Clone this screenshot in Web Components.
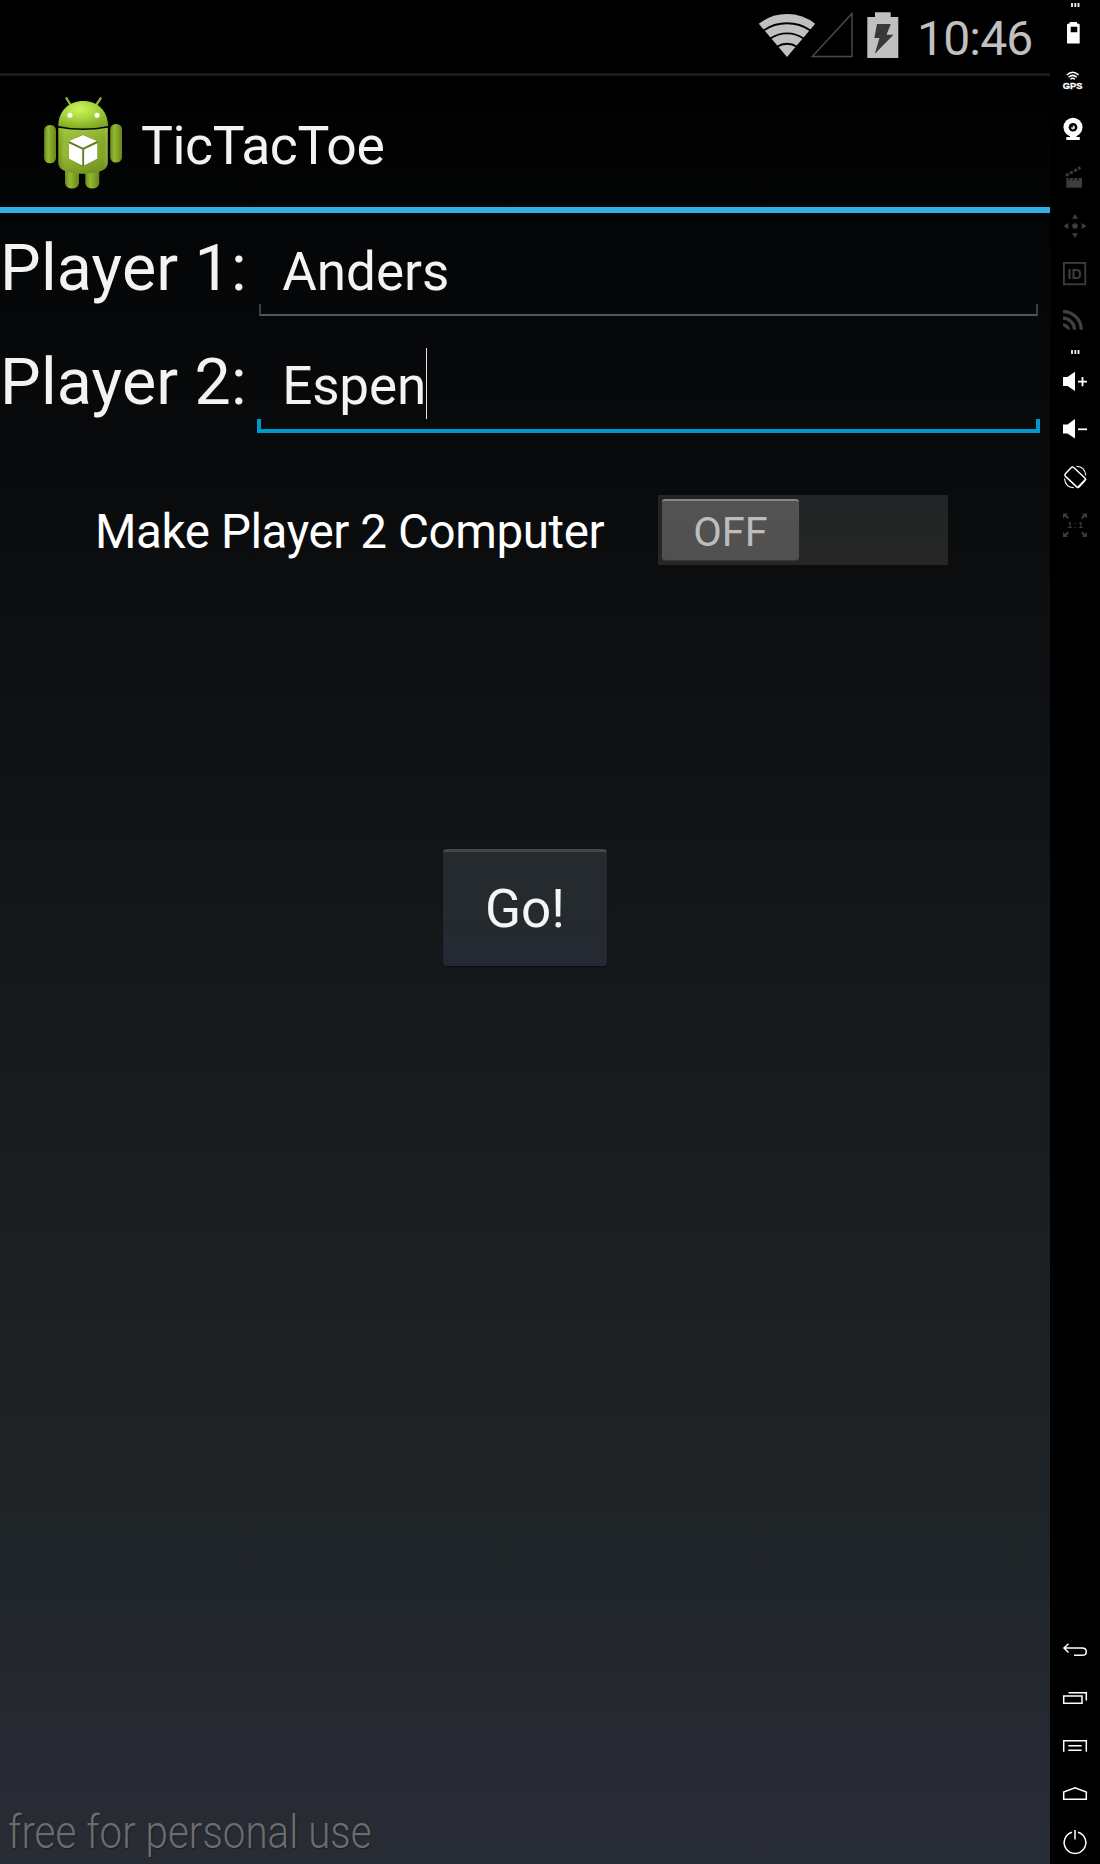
<!DOCTYPE html>
<html lang="en">
<head>
<meta charset="utf-8">
<title>TicTacToe</title>
<style>
html,body{margin:0;background:#000;height:1864px;overflow:hidden}
</style>
</head>
<body>
<tic-emulator></tic-emulator>
<script>
const define = (name, html, after) => customElements.define(name, class extends HTMLElement {
  constructor() {
    super();
    const t = document.createElement('template');
    t.innerHTML = html;
    this.attachShadow({mode: 'open'}).append(t.content.cloneNode(true));
  }
  connectedCallback() { if (after) after(this, this.shadowRoot); }
});

define('status-bar', `
<style>
:host{display:flex;box-sizing:border-box;height:76px;border-bottom:3px solid #1b1b1b;background:#000;justify-content:flex-end;padding-right:16px}
svg{display:block;width:160px;height:73px;flex:none}
span{font-size:48px;line-height:77px;height:73px;color:#c0c0c0;width:117px;white-space:nowrap;letter-spacing:-.8px}
</style>
<svg viewBox="757 0 160 73">
<path d="M787 57 L758.8 23.8 Q771 14 787 14 Q803 14 815.2 23.8 Z" fill="#c0c0c0"/>
<g fill="none" stroke="#000" stroke-width="1.9">
<path d="M763.5 30.5 Q774 23.3 787 23.3 Q800 23.3 810.500 30.500"/>
<path d="M770 38.800 Q777.500 33.400 787 33.400 Q796.500 33.400 804 38.800"/>
<path d="M777 46.700 Q781.500 43.800 787 43.800 Q792.500 43.800 797 46.700"/></g>
<path d="M812.300 56.500 L852 13.500 V56.500 Z" fill="none" stroke="#484848" stroke-width="1.500"/>
<path d="M867.300 17 H875 V12.300 H890.700 V17 H898.300 V58 H867.300 Z" fill="#c0c0c0"/>
<path d="M877 24 H890.800 L886.500 34.700 H893.500 L874.800 53.700 L879.500 38 H874.300 Z" fill="#383838"/>
</svg><span>10:46</span>`);

define('android-icon', `
<style>:host{display:block;width:90px;height:100px}svg{display:block}</style>
<svg width="90" height="100" viewBox="40 92 90 100">
<defs>
<radialGradient id="h" cx=".42" cy=".3" r=".75"><stop offset="0" stop-color="#cdf560"/><stop offset=".45" stop-color="#a9d73c"/><stop offset="1" stop-color="#7ea423"/></radialGradient>
<linearGradient id="b" x1="0" x2="1" y1="0" y2="0"><stop offset="0" stop-color="#7e9e25"/><stop offset=".12" stop-color="#9bc237"/><stop offset=".5" stop-color="#96bc33"/><stop offset=".93" stop-color="#86aa2a"/><stop offset="1" stop-color="#a3bd5c"/></linearGradient>
<linearGradient id="d" x1="0" x2="0" y1="0" y2="1"><stop offset="0" stop-color="#b0dc48" stop-opacity=".35"/><stop offset=".6" stop-color="#567016" stop-opacity=".1"/><stop offset="1" stop-color="#435a0e" stop-opacity=".4"/></linearGradient>
<linearGradient id="a" x1="0" x2="1" y1="0" y2="0"><stop offset="0" stop-color="#6d8b1f"/><stop offset=".35" stop-color="#93ba32"/><stop offset="1" stop-color="#66851b"/></linearGradient>
</defs>
<g stroke="#8fb33a" stroke-width="2.300" stroke-linecap="round"><path d="M66.500 98.300 L70.300 104.500 M100.600 98.300 L96.500 104.500"/></g>
<rect x="65" y="164" width="14" height="24.500" rx="6" fill="url(#a)"/><rect x="85.300" y="164" width="14" height="24.500" rx="6" fill="url(#a)"/>
<rect x="44.200" y="125" width="11.800" height="38.300" rx="5.500" fill="url(#a)"/><rect x="110.200" y="124" width="11.800" height="38.500" rx="5.500" fill="url(#a)"/>
<path d="M58.300 126 C58.300 111 69 101 83.200 101 C97.500 101 108 111 108 126 Q96 128.500 83.200 128.500 Q70 128.500 58.300 126Z" fill="url(#h)"/>
<path d="M58.300 127.800 Q70 130 83.200 130 Q96 130 107.700 127.800 V163 Q107.700 168 101 171 Q93 173.800 83 173.800 Q73 173.800 65 171 Q58.300 168 58.300 163Z" fill="url(#b)"/>
<path d="M58.300 127.800 Q70 130 83.200 130 Q96 130 107.700 127.800 V163 Q107.700 168 101 171 Q93 173.800 83 173.800 Q73 173.800 65 171 Q58.300 168 58.300 163Z" fill="url(#d)"/>
<circle cx="70" cy="115.300" r="2.500" fill="#fff"/><circle cx="97" cy="115.300" r="2.500" fill="#fff"/>
<path d="M69 141 L83 134.500 L97.500 141 V159 L83 166.500 L69 159Z" fill="#64801c"/>
<path d="M83 135 L97 141 L83 147.700 L69 141Z M69 143.300 L82.200 149.500 V165.500 L69 158.700Z M84.100 149.500 L97.300 143.300 V158.700 L84.100 165.500Z" fill="#fff"/>
</svg>`);

define('action-bar', `
<style>
:host{display:flex;box-sizing:border-box;height:137px;border-bottom:6px solid #33b0e2;padding:16px 0 0 40px}
div{margin-left:11px;font-size:53.5px;line-height:107px;height:100px;color:#f3f3f3;white-space:nowrap;letter-spacing:-.43px}
</style><android-icon></android-icon><div><slot></slot></div>`);

define('player-field', `
<style>
:host{display:flex;height:114px;color:#f3f3f3;white-space:nowrap}
label{width:257px;font-size:64.500px;line-height:110px;letter-spacing:.2px}
.f{position:relative;flex:none;width:783px;height:120px;box-sizing:border-box;padding:4px 0 0 25.200px;display:flex;align-items:flex-start;font-size:53px;line-height:110px}
:host([focused]) .f{letter-spacing:-.15px}
.u{position:absolute;left:2px;right:2px;top:91px;height:12px;box-sizing:border-box;border:solid #3c3d3e;border-width:0 2px 2px;border-bottom-color:#555657}
:host([focused]) .u{left:0;right:0;top:92px;height:14px;border:4px solid #0099cc;border-top:0}
i{display:none;width:1.500px;height:71px;margin:17px 0 0 -.500px;background:#e4e4e4}
:host([focused]) i{display:block}
</style><label><slot name="label"></slot></label><div class="f"><span><slot></slot></span><i></i><div class="u"></div></div>`);

define('toggle-switch', `
<style>
:host{display:flex;box-sizing:border-box;width:290px;height:70px;padding:4px;background:linear-gradient(#232426,#252625)}
div{box-sizing:border-box;width:137px;height:61px;border-radius:3px;border-top:2px solid #858686;background:linear-gradient(#525352,#505050);box-shadow:0 1px 1px #3a3a3a;color:#bdbdbd;text-align:center;font-size:41.500px;line-height:61px}
</style><div><slot></slot></div>`);

define('switch-row', `
<style>
:host{display:flex;height:70px;margin-top:54px;padding-left:95px}
span{width:563px;font-size:47.500px;line-height:74px;color:#fff;white-space:nowrap;letter-spacing:-.4px}
</style><span><slot></slot></span><toggle-switch>OFF</toggle-switch>`);

define('go-button', `
<style>
:host{display:block;box-sizing:border-box;width:164px;height:117px;margin:284px 0 0 443px;border-radius:4px;border-top:3px solid #424749;background:linear-gradient(#242a2d 0,#242a2e 55%,#252932 75%,#252932);box-shadow:0 1px 2px rgba(0,0,0,.5);color:#f5f5f5;text-align:center;font-size:53px;line-height:115px}
</style><slot></slot>`);

define('app-screen', `
<style>
:host{display:flex;flex-direction:column;width:1050px;height:1864px;flex:none;background:linear-gradient(#000 76px,#040506 213px,#0a0b0d 500px,#13171a 900px,#1c2023 1300px,#21262a 1600px,#272a33 1760px,#282c34)}
main{flex:1;display:flex;flex-direction:column}
footer{font-weight:300;font-size:46px;line-height:60px;color:#6a6d70;text-shadow:1px 1px 1px #1b1d22;padding:0 0 2.500px 8px;white-space:nowrap}
footer span{display:inline-block;transform:scaleX(.877);transform-origin:0 0}
</style>
<status-bar></status-bar><action-bar>TicTacToe</action-bar>
<main>
<player-field><span slot="label">Player 1:</span>Anders</player-field>
<player-field focused><span slot="label">Player 2:</span>Espen</player-field>
<switch-row>Make Player 2 Computer</switch-row>
<go-button>Go!</go-button>
</main>
<footer><span>free for personal use</span></footer>`);

const ICONS = {
dots: [0, 8, '<path d="M21 3h2v4h-2zM24.300 3h2v4h-2zM27.500 3h2v4h-2z" fill="#ddd"/>'],
battery: [8, 48, '<path fill-rule="evenodd" d="M17 24.500 L18.500 23.500 H19.700 V22 H27 V23.500 H28.300 L29.700 24.500 V43.500 H17Z M20.700 26.700 V32.300 H27.300 V26.700Z" fill="#fff"/>'],
gps: [56, 48, '<g fill="none" stroke="#fff" stroke-width="1.500"><path d="M16.800 75 Q22.700 69.500 28.600 75M18.600 77.200 Q22.700 73.500 26.800 77.200M20.500 79.200 Q22.700 77.300 24.900 79.200"/></g><text x="12.800" y="88.700" font-size="8.600" font-weight="700" stroke="#fff" stroke-width=".3" fill="#fff" font-family="Liberation Sans,sans-serif" textLength="19.500" lengthAdjust="spacingAndGlyphs">GPS</text>'],
camera: [104, 48, '<circle cx="23" cy="127.300" r="9.500" fill="#fff"/><circle cx="23" cy="127.300" r="4.300" fill="#000"/><circle cx="23" cy="127.500" r="2" fill="#ddd"/><circle cx="22" cy="126.500" r="1" fill="#000"/><path d="M20 135h6.500v2h3.300v3H16.300v-3H20z" fill="#fff"/>'],
clapper: [152, 48, '<path d="M16.300 178 H32 V187.700 H16.300Z" fill="#3d3d3b"/><path d="M15.800 175.500 L30.500 167.500" stroke="#3d3d3b" stroke-width="3" stroke-dasharray="3.200 1.500" fill="none"/><path d="M18 180.300 l2-2.300 M22.500 180.300 l2-2.300 M27 180.300 l2-2.300" stroke="#111" stroke-width="1.200"/>'],
move: [200, 48, '<g fill="#3f3e3a"><circle cx="25" cy="226" r="2.800"/><path d="M25 214 L28 218.800 H22Z M25 238 L28 233.200 H22Z M13.500 226 L18.300 223 V229Z M36.500 226 L31.700 223 V229Z"/></g>'],
id: [248, 48, '<rect x="13.900" y="262.900" width="21.400" height="21.400" fill="none" stroke="#3f3e3a" stroke-width="1.800"/><text x="17.600" y="279.300" font-size="15" font-weight="700" fill="#3f3e3a" font-family="Liberation Sans,sans-serif" textLength="14" lengthAdjust="spacingAndGlyphs">ID</text>'],
rss: [296, 48, '<g fill="none" stroke="#42413d" stroke-width="3.200"><path d="M13 311.700 A18 18 0 0 1 31.300 329.700"/><path d="M13 318.200 A11.500 11.500 0 0 1 24.500 329.700"/></g><path d="M13 323.300 Q19 324 20 329.700 H18.500 L13 326Z" fill="#42413d"/>'],
dots2: [344, 13, '<path d="M21 350h2v4h-2zM24.300 350h2v4h-2zM27.500 350h2v4h-2z" fill="#ddd"/>'],
up: [357, 48, '<path d="M13 377 H17.500 L25 371.700 V391 L17.500 386 H13Z" fill="#fff"/><path d="M28 381.700h9M32.500 377v9.300" stroke="#fff" stroke-width="1.800"/>'],
down: [405, 48, '<path d="M13 424.500 H17.500 L25 419 V438.500 L17.500 433.500 H13Z" fill="#fff"/><path d="M28 429.300h9" stroke="#fff" stroke-width="1.800"/>'],
rotate: [453, 48, '<g fill="none" stroke="#fff"><rect x="15.700" y="471.200" width="19" height="12" rx="1.800" transform="rotate(43 25.200 477.200)" stroke-width="1.500"/><path d="M28 487 L36 478.800" stroke-width="1.300"/><path d="M26.500 466.200 Q35 466.500 35.800 475.500M14.500 478.500 Q15.300 487.300 23.800 487.800" stroke-width="1.100"/></g>'],
scale: [501, 48, '<g fill="#3c3c39"><path d="M13 513.500h5l-1.500 1.500 2.500 2.500-1.500 1.500-2.500-2.500-2 2zM37 513.500h-5l1.500 1.500-2.500 2.500 1.500 1.500 2.500-2.500 2 2zM13 537h5l-1.500-1.500 2.500-2.500-1.500-1.500-2.500 2.500-2-2zM37 537h-5l1.500-1.500-2.500-2.500 1.500-1.500 2.500 2.500 2-2z"/><text x="17.500" y="528" font-size="8.500" font-weight="700" font-family="Liberation Sans,sans-serif" textLength="15.500">1:1</text></g>'],
back: [1626, 48, '<path d="M18.500 1643.800 L14 1648 L18.500 1652.500 M14 1648 H32 Q36.300 1648 36.300 1651.700 Q36.300 1655.300 32 1655.300 H24" fill="none" stroke="#fff" stroke-width="1.500"/>'],
recents: [1674, 48, '<path d="M13.700 1696 H32 V1703.300 H13.700Z M18.500 1692.700 H36.300 V1700.500" fill="none" stroke="#fff" stroke-width="1.500"/>'],
menu: [1722, 48, '<path d="M13.700 1751.800 V1740.800 H36.300 V1751.800 M18.300 1745.700 H31.700 M18.300 1750.300 H31.700" fill="none" stroke="#fff" stroke-width="1.500"/>'],
home: [1770, 48, '<path d="M13.700 1799.300 V1792 L25 1787.800 L36.300 1792 V1799.300Z" fill="none" stroke="#fff" stroke-width="1.500"/>'],
power: [1818, 46, '<path d="M22 1832.300 A10.800 10.800 0 1 0 28 1832.300 M25 1830 V1839.500" fill="none" stroke="#fff" stroke-width="1.500"/>']
};
define('rail-icon', `<style>:host{display:block;flex:none}svg{display:block}</style><svg width="50"></svg>`, (el, root) => {
  const [y, h, art] = ICONS[el.getAttribute('name')];
  const s = root.querySelector('svg');
  s.setAttribute('height', h);
  s.setAttribute('viewBox', `0 ${y} 50 ${h}`);
  s.innerHTML = art;
});
define('tool-rail', `
<style>:host{display:flex;flex-direction:column;justify-content:space-between;width:50px;height:1864px;background:#000}</style>
<div>${['dots','battery','gps','camera','clapper','move','id','rss','dots2','up','down','rotate','scale'].map(n=>`<rail-icon name="${n}"></rail-icon>`).join('')}</div>
<div>${['back','recents','menu','home','power'].map(n=>`<rail-icon name="${n}"></rail-icon>`).join('')}</div>`);

define('tic-emulator', `
<style>:host{display:flex;width:1100px;height:1864px;font-family:Roboto,sans-serif;font-kerning:normal}</style>
<app-screen></app-screen><tool-rail></tool-rail>`);
</script>
</body>
</html>
